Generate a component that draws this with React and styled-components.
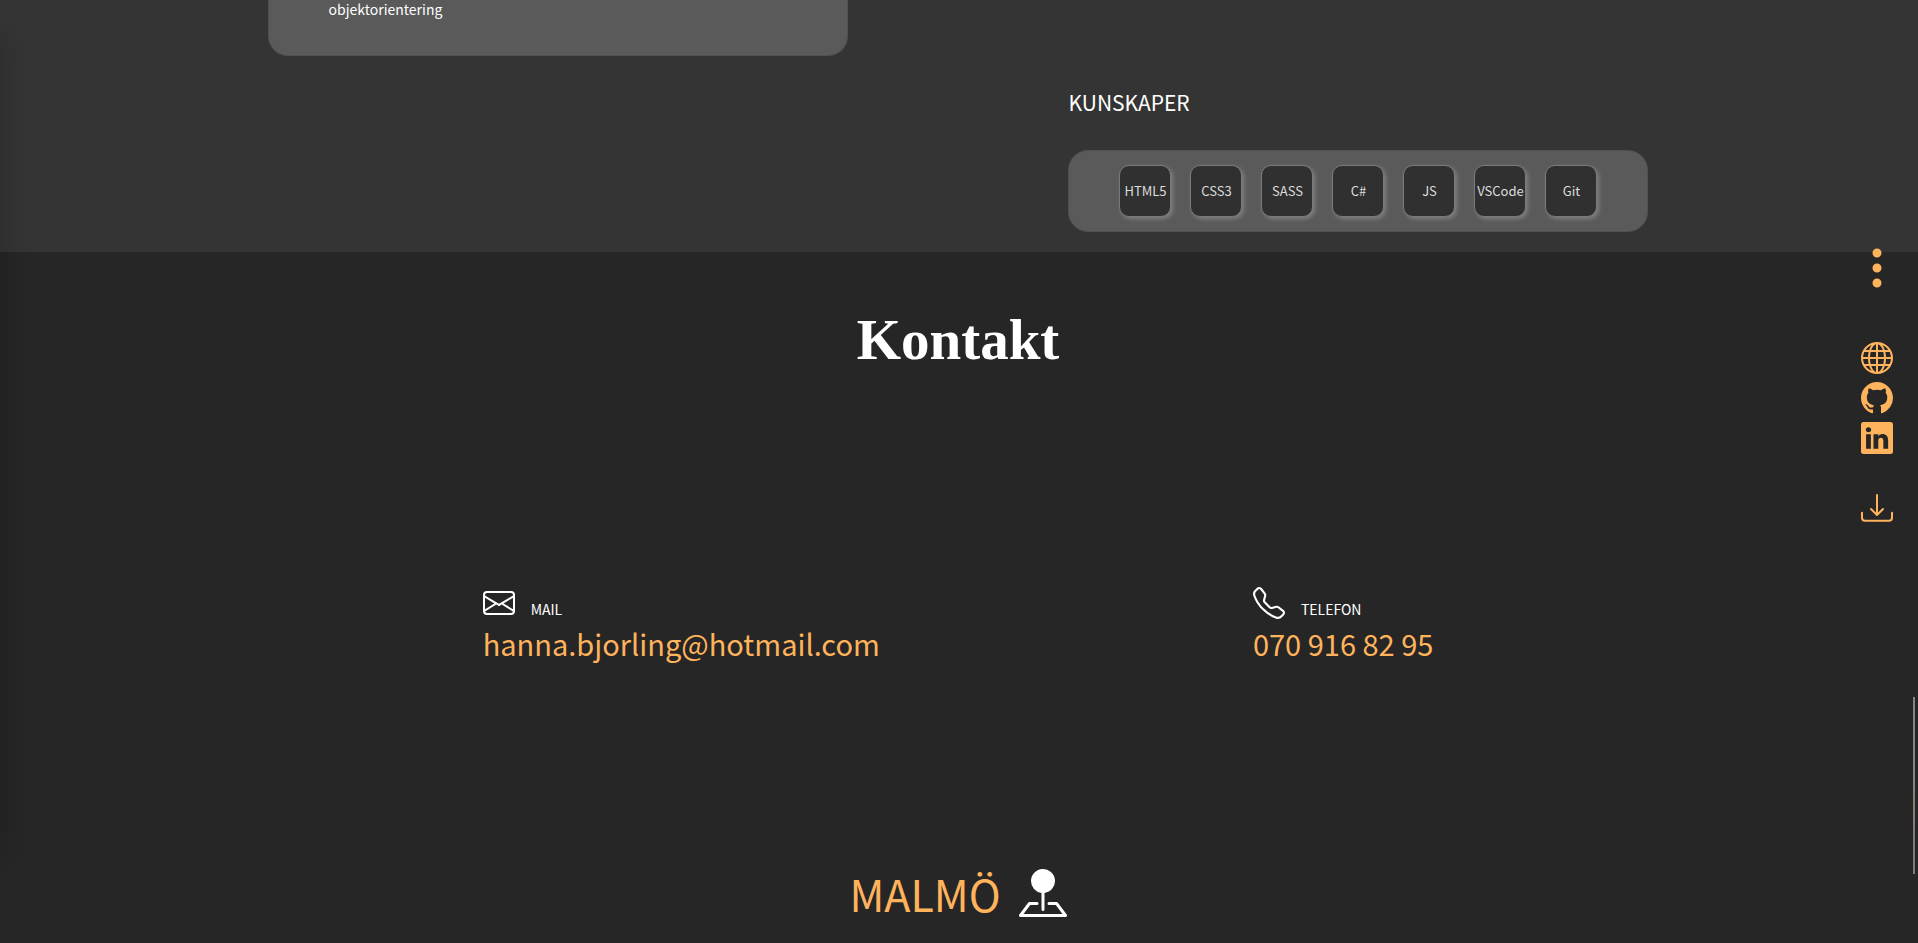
import React from "react";
import styled, { createGlobalStyle } from "styled-components";
import {
  BsThreeDotsVertical,
  BsGlobe,
  BsGithub,
  BsLinkedin,
  BsDownload,
  BsEnvelope,
  BsTelephone,
  BsPinMapFill,
} from "react-icons/bs";

const accent = "#ffb35c";

const GlobalStyle = createGlobalStyle`
  *, *::before, *::after { box-sizing: border-box; }
  body {
    margin: 0;
    background: #262626;
    color: #fff;
    font-family: "Noto Sans CJK JP", "Noto Sans", sans-serif;
    font-size: 14px;
    line-height: 20px;
    overflow-x: hidden;
  }
  h2, h3, p, ul { margin: 0; padding: 0; font-weight: 400; }
  a { color: ${accent}; text-decoration: none; }
`;

const Resume = styled.section`
  display: flex;
  flex-direction: column;
  gap: 32px;
  padding: 0 calc(14% + 1px) 20px calc(14% - 1px);
  background: #343434;
`;

const Card = styled.div`
  width: 42%;
  border: 1px solid #505050;
  border-radius: 20px;
  background: #5a5a5a;
`;

const CourseCard = styled(Card)`
  padding: 0 60px 37px;
  border-top: 0;
  border-radius: 0 0 20px 20px;
  line-height: 18px;
`;

const Skills = styled.div`
  display: flex;
  flex-direction: column;
  align-items: flex-end;
`;

const SkillsTitle = styled.h3`
  width: 42%;
  margin-bottom: 34px;
  font-size: 21px;
  line-height: 28px;
`;

const SkillList = styled(Card).attrs({ as: "ul" })`
  && { padding: 14px 0; }
  display: flex;
  justify-content: center;
  gap: 19px;
  list-style: none;
`;

const Skill = styled.li`
  display: flex;
  align-items: center;
  justify-content: center;
  width: 52px;
  height: 52px;
  border: 1px solid #7a7a7a;
  border-radius: 10px;
  background: #303030;
  box-shadow: 2px 2px 4px #808080;
  color: #ddd;
  font-size: 13px;
  white-space: nowrap;
`;

const Contact = styled.section`
  display: flex;
  flex-direction: column;
  align-items: center;
  padding: 52px 2px 15px 0;
  background: #262626;
`;

const ContactTitle = styled.h2`
  && { font-weight: 700; }
  margin-bottom: 211px;
  font-family: "Liberation Serif", serif;
  font-size: 57px;
  line-height: 72px;
`;

const ContactList = styled.div`
  display: flex;
  justify-content: center;
  gap: 373px;
  margin-bottom: 204px;
`;

const ContactLabel = styled.p`
  display: flex;
  align-items: flex-end;
  gap: 16px;
`;

const ContactLink = styled.a`
  display: block;
  padding-top: 4px;
  font-size: 29px;
  line-height: 40px;
`;

const Place = styled.div`
  display: flex;
  align-items: center;
  gap: 18px;
`;

const PlaceLink = styled.a`
  font-size: 43px;
  line-height: 52px;
`;

const SideRail = styled.nav`
  position: fixed;
  top: 244px;
  right: 17px;
  display: flex;
  flex-direction: column;
  align-items: center;
  gap: 8px;
  color: ${accent};
  svg { display: block; }
`;

const MenuButton = styled.button`
  margin-bottom: 42px;
  padding: 0;
  border: 0;
  background: none;
  color: inherit;
`;

const DownloadLink = styled.a`
  margin-top: 30px;
`;

const Drawer = styled.aside`
  position: fixed;
  top: 40px;
  left: -300px;
  width: 300px;
  height: 810px;
  box-shadow: 0 0 26px rgba(0, 0, 0, 0.2);
`;

const ScrollMark = styled.div`
  position: fixed;
  top: 697px;
  right: 3px;
  width: 2px;
  height: 177px;
  background: linear-gradient(#848484 50%, #8a8070 60%, #857a7a 75%);
`;

const skills = ["HTML5", "CSS3", "SASS", "C#", "JS", "VSCode", "Git"];

export default function App() {
  return (
    <>
      <GlobalStyle />
      <main>
        <Resume>
          <CourseCard>
            <p>objektorientering</p>
          </CourseCard>
          <Skills>
            <SkillsTitle>KUNSKAPER</SkillsTitle>
            <SkillList>
              {skills.map((name) => (
                <Skill key={name}>{name}</Skill>
              ))}
            </SkillList>
          </Skills>
        </Resume>
        <Contact>
          <ContactTitle>Kontakt</ContactTitle>
          <ContactList>
            <div>
              <ContactLabel>
                <BsEnvelope size={32} /> MAIL
              </ContactLabel>
              <ContactLink href="mailto:hanna.bjorling@hotmail.com">
                hanna.bjorling@hotmail.com
              </ContactLink>
            </div>
            <div>
              <ContactLabel>
                <BsTelephone size={32} /> TELEFON
              </ContactLabel>
              <ContactLink href="tel:0709168295">070 916 82 95</ContactLink>
            </div>
          </ContactList>
          <Place>
            <PlaceLink href="#malmo">MALMÖ</PlaceLink>
            <BsPinMapFill size={48} />
          </Place>
        </Contact>
      </main>
      <Drawer />
      <SideRail>
        <MenuButton type="button" aria-label="Meny">
          <BsThreeDotsVertical size={48} />
        </MenuButton>
        <a href="#web" aria-label="Webbplats"><BsGlobe size={32} /></a>
        <a href="#github" aria-label="GitHub"><BsGithub size={32} /></a>
        <a href="#linkedin" aria-label="LinkedIn"><BsLinkedin size={32} /></a>
        <DownloadLink href="#cv" aria-label="Ladda ner CV"><BsDownload size={32} /></DownloadLink>
      </SideRail>
      <ScrollMark />
    </>
  );
}
